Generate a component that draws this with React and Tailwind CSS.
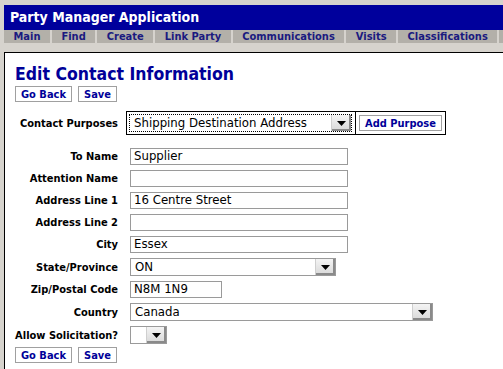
const tabs = ["Main", "Find", "Create", "Link Party", "Communications", "Visits", "Classifications"];

function Btn({ children }) {
  return (
    <button className="h-[16px] px-[5px] border border-[#a0a0a0] bg-white text-[11px] font-bold leading-none text-[#000099]">
      {children}
    </button>
  );
}

function TextBox({ value, w }) {
  return (
    <div className={`${w} h-[17px] border border-[#9a9a9a] bg-white px-[3px] text-[11.75px] leading-[15px] text-black font-['DejaVu_Sans',sans-serif]`}>
      {value}
    </div>
  );
}

function Arrow() {
  return (
    <div className="w-[20px] h-full flex items-center justify-center bg-gradient-to-b from-[#f4f4f4] to-[#d8d8d8] border-l border-[#cfcfcf] shadow-[inset_-2px_-2px_0_#8a8a8a]">
      <svg width="9" height="5" viewBox="0 0 9 5"><path d="M0 0h9L4.5 5z" fill="#000" /></svg>
    </div>
  );
}

function Select({ value, w }) {
  return (
    <div className={`${w} h-[18px] flex border border-[#9a9a9a] bg-white`}>
      <div className="flex-1 px-[4px] text-[11.75px] leading-[16px] text-black font-['DejaVu_Sans',sans-serif]">{value}</div>
      <Arrow />
    </div>
  );
}

function Row({ label, children }) {
  return (
    <>
      <div className="text-right text-[11px] font-bold text-black leading-none">{label}</div>
      <div className="flex items-center">{children}</div>
    </>
  );
}

export default function App() {
  return (
    <div className="w-[503px] h-[369px] overflow-hidden bg-[#d6d3cd] pt-[5px] pl-[4px]" style={{ fontFamily: '"DejaVu Sans Condensed", "DejaVu Sans", Verdana, sans-serif' }}>
      <div className="h-[25px] bg-[#00009c] pl-[6px] flex items-center text-white text-[14px] font-bold">
        Party Manager Application
      </div>
      <div className="h-[13px] flex bg-[#d6d3cd]">
        {tabs.map((t) => (
          <div key={t} className="shrink-0 mr-[2px] bg-[#b3b0a9] px-[9.5px] text-[11px] font-bold leading-[13px] text-[#1a1a80]">
            {t}
          </div>
        ))}
        <div className="flex-1 bg-[#b3b0a9]" />
      </div>
      <div className="h-[9px]" />
      <div className="h-[400px] bg-white border-t border-l border-black pl-[10px] pt-[11px]">
        <div className="text-[17.5px] font-bold text-[#000099] leading-[20px]">Edit Contact Information</div>
        <div className="flex gap-[6px] mt-[2px]">
          <Btn>Go Back</Btn>
          <Btn>Save</Btn>
        </div>
        <div className="grid grid-cols-[103px_auto] gap-x-[12px] items-center mt-[9px]">
          <Row label="Contact Purposes">
            <div className="flex -ml-[4px] border border-black">
              <div className="p-[2px] pr-[3px] border-r border-black">
                <div className="w-[223px] h-[18px] flex border border-dotted border-black bg-white">
                  <div className="flex-1 px-[4px] text-[11.75px] leading-[16px] text-black font-['DejaVu_Sans',sans-serif]">Shipping Destination Address</div>
                  <Arrow />
                </div>
              </div>
              <div className="px-[3px] flex items-center">
                <Btn>Add Purpose</Btn>
              </div>
            </div>
          </Row>
        </div>
        <div className="grid grid-cols-[103px_auto] gap-x-[12px] gap-y-[5px] items-center mt-[13px]">
          <Row label="To Name"><TextBox value="Supplier" w="w-[218px]" /></Row>
          <Row label="Attention Name"><TextBox value="" w="w-[218px]" /></Row>
          <Row label="Address Line 1"><TextBox value="16 Centre Street" w="w-[218px]" /></Row>
          <Row label="Address Line 2"><TextBox value="" w="w-[218px]" /></Row>
          <Row label="City"><TextBox value="Essex" w="w-[218px]" /></Row>
          <Row label="State/Province"><Select value="ON" w="w-[206px]" /></Row>
          <Row label="Zip/Postal Code"><TextBox value="N8M 1N9" w="w-[92px]" /></Row>
          <Row label="Country"><Select value="Canada" w="w-[303px]" /></Row>
          <Row label="Allow Solicitation?"><Select value="" w="w-[37px]" /></Row>
        </div>
        <div className="flex gap-[6px] mt-[3px]">
          <Btn>Go Back</Btn>
          <Btn>Save</Btn>
        </div>
      </div>
    </div>
  );
}
